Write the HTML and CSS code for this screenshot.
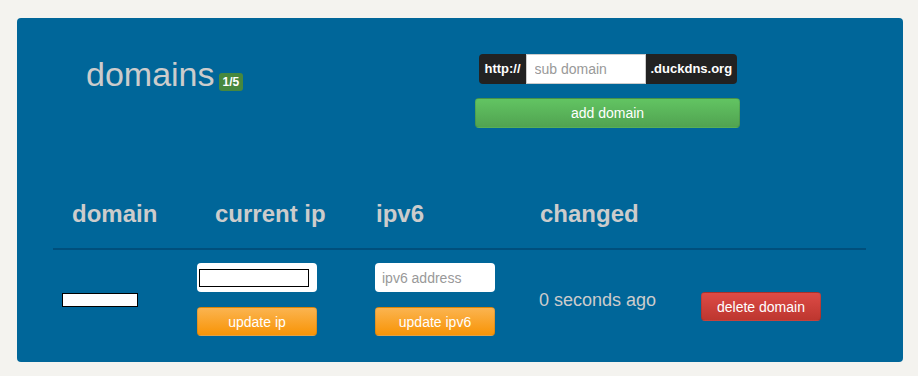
FILE: index.html
```html
<!DOCTYPE html>
<html lang="en">

<head>
    <meta charset="UTF-8">
    <meta name="viewport" content="width=device-width, initial-scale=1.0">
    <title>Duck DNS - domains</title>
    <link rel="stylesheet" href="styles.css">
</head>

<body>
    <div class="panel">
        <div class="top">
            <div class="title">domains<span class="badge">1/5</span></div>

            <form class="add-form">
                <div class="input-group">
                    <span class="addon addon-left">http://</span>
                    <input type="text" class="sub-input" placeholder="sub domain">
                    <span class="addon addon-right">.duckdns.org</span>
                </div>
                <button type="button" class="btn btn-success btn-wide">add domain</button>
            </form>
        </div>

        <div class="domains">
            <div class="head head-domain">domain</div>
            <div class="head head-ip">current ip</div>
            <div class="head">ipv6</div>
            <div class="head">changed</div>
            <div class="head"></div>

            <div class="cell cell-domain"><span class="hidden-box"></span></div>
            <div class="cell cell-stack">
                <div class="ip-field"><span class="hidden-box hidden-ip"></span></div>
                <button type="button" class="btn btn-warning">update ip</button>
            </div>
            <div class="cell cell-stack">
                <input type="text" class="ip-input" placeholder="ipv6 address">
                <button type="button" class="btn btn-warning">update ipv6</button>
            </div>
            <div class="cell changed">0 seconds ago</div>
            <div class="cell">
                <button type="button" class="btn btn-danger btn-delete">delete domain</button>
            </div>
        </div>
    </div>
</body>

</html>
```

FILE: styles.css
```css
body {
    margin: 0;
    padding: 18px 15px 14px 17px;
    background: #f4f3ef;
    font-family: 'Liberation Sans', Arial, sans-serif;
    font-size: 14px;
    color: #cccccc;
}

.panel {
    background: #006699;
    border-radius: 4px;
    padding: 36px 37px 26px 36px;
    height: 282px;
}

/* top part: title + add form */
.top {
    display: flex;
    justify-content: space-between;
    padding: 0 126px 0 33px;
}

.title {
    font-size: 34px;
    line-height: 40px;
    color: #cccccc;
}

.badge {
    display: inline-block;
    margin-left: 4px;
    padding: 2px 4px;
    background: #47883e;
    border-radius: 3px;
    color: #ffffff;
    font-size: 12px;
    font-weight: bold;
    line-height: 14px;
}

.add-form {
    width: 265px;
    display: flex;
    flex-direction: column;
    align-items: center;
    gap: 14px;
}

.input-group {
    display: flex;
    height: 30px;
}

.addon {
    background: #222222;
    color: #ffffff;
    font-size: 13px;
    font-weight: bold;
    line-height: 30px;
}

.addon-left {
    width: 47px;
    padding-left: 6px;
    box-sizing: border-box;
    border-radius: 4px 0 0 4px;
}

.addon-right {
    width: 91px;
    padding-left: 5px;
    box-sizing: border-box;
    border-radius: 0 4px 4px 0;
}

.sub-input {
    width: 120px;
    height: 30px;
    box-sizing: border-box;
    margin: 0;
    padding: 0 8px;
    border: 1px solid #cccccc;
    font-family: inherit;
    font-size: 14px;
    outline: none;
}

input::placeholder {
    color: #999999;
}

/* buttons */
.btn {
    height: 29px;
    border: 1px solid rgba(0, 0, 0, 0.1);
    border-radius: 4px;
    color: #ffffff;
    font-family: inherit;
    font-size: 14px;
    padding: 0;
    width: 120px;
}

.btn-success {
    background: linear-gradient(to bottom, #62c462, #51a351);
}

.btn-warning {
    background: linear-gradient(to bottom, #fbb450, #f89406);
}

.btn-danger {
    background: linear-gradient(to bottom, #dd4b46, #bd362f);
}

.btn-wide {
    width: 265px;
    height: 30px;
}

/* domain table */
.domains {
    display: grid;
    grid-template-columns: 144px 178px 164px 162px 1fr;
    align-items: center;
    margin-top: 72px;
}

.head {
    align-self: stretch;
    font-size: 24px;
    font-weight: bold;
    line-height: 28px;
    padding: 0 0 20px 1px;
    border-bottom: 2px solid #004f7c;
    white-space: nowrap;
}

.head-domain {
    padding-left: 19px;
}

.head-ip {
    padding-left: 18px;
}

.cell {
    padding: 13px 0 26px 0;
}

.cell-domain {
    padding-left: 9px;
}

.cell-stack {
    display: flex;
    flex-direction: column;
    gap: 15px;
}

.hidden-box {
    display: block;
    width: 76px;
    height: 14px;
    box-sizing: border-box;
    background: #ffffff;
    border: 1px solid #000000;
}

.ip-field {
    width: 120px;
    height: 29px;
    box-sizing: border-box;
    background: #ffffff;
    border-radius: 4px;
    padding: 6px 0 0 2px;
}

.hidden-ip {
    width: 110px;
    height: 18px;
}

.ip-input {
    width: 120px;
    height: 29px;
    box-sizing: border-box;
    margin: 0;
    padding: 0 7px;
    border: none;
    border-radius: 4px;
    font-family: inherit;
    font-size: 14px;
    outline: none;
}

.changed {
    font-size: 18px;
    line-height: 20px;
}

.btn-delete {
    margin-top: 14px;
}
```
